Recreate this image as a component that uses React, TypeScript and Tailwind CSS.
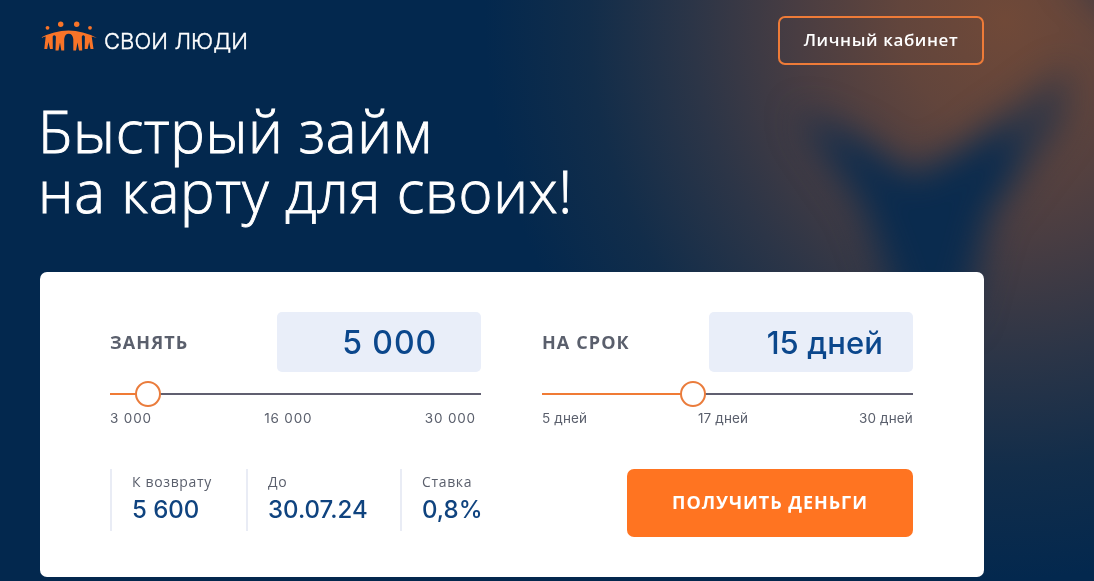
import { useState } from "react";

interface SliderProps {
  label: string;
  display: string;
  value: number;
  min: number;
  max: number;
  marks: string[];
  labelClass: string;
  displayClass: string;
  marksClass: string;
  onChange: (value: number) => void;
}

function Backdrop() {
  return (
    <svg
      className="absolute inset-0 h-full w-full"
      viewBox="0 0 1094 581"
      preserveAspectRatio="xMaxYMin slice"
      aria-hidden="true"
    >
      <defs>
        <radialGradient
          id="glow"
          cx="0"
          cy="0"
          r="1"
          gradientUnits="userSpaceOnUse"
          gradientTransform="translate(1005 20) scale(520 560)"
        >
          <stop offset="0" stopColor="#704938" />
          <stop offset="0.2" stopColor="#62453c" />
          <stop offset="0.4" stopColor="#493d42" />
          <stop offset="0.6" stopColor="#2c3547" />
          <stop offset="0.8" stopColor="#122d4a" />
          <stop offset="1" stopColor="#03284e" />
        </radialGradient>
        <filter id="soft" x="-50%" y="-50%" width="200%" height="200%" colorInterpolationFilters="sRGB">
          <feGaussianBlur stdDeviation="18" />
        </filter>
      </defs>
      <rect width="1094" height="581" fill="#03284e" />
      <rect width="1094" height="581" fill="url(#glow)" />
      <g fill="#0a2b4e" filter="url(#soft)">
        <path d="M798 112 L860 140 L912 176 L965 148 L1012 118 L1012 175 L990 215 L962 320 L905 320 L862 205 Z" />
        <path d="M975 138 L1072 66 L1062 125 L1000 205 Z" opacity="0.6" />
        <path d="M1060 -30 L1150 -30 L1150 50 Z" opacity="0.4" />
      </g>
    </svg>
  );
}

function Logo() {
  return (
    <a href="#" className="flex items-end gap-[6px]">
      <svg width="58" height="31" viewBox="0 0 58 31" fill="#f97428">
        <circle cx="7.5" cy="6.8" r="1.9" />
        <circle cx="20.7" cy="3.2" r="2.7" />
        <circle cx="36.7" cy="3.2" r="2.7" />
        <circle cx="50" cy="6.8" r="1.9" />
        <path d="M0 17 Q28.500 2 57 17 L51.700 15.500 L53.500 28 L50.500 28 L49.200 21 L47.600 28 L44.700 28 L44.900 15.500 Q43.200 13 41.800 15.500 L42.200 29.500 L39 29.500 L37.500 21.500 L36 29.500 L33.300 29.500 L33.300 18 Q32.500 12.800 28.700 12.800 Q24.800 12.800 24.200 18 L24.200 29.500 L21.300 29.500 L20 21.500 L18.500 29.500 L15.500 29.500 L15.900 15.500 Q14.200 13 12.700 15.500 L12.800 28 L10 28 L8.400 21 L7.200 28 L4.300 28 L5.700 15.500 Z" />
      </svg>
      <span className="mb-[-4px] font-[Inter,sans-serif] text-[22px] leading-[29px] font-light tracking-[0.1px] whitespace-nowrap text-white [-webkit-text-stroke:0.4px_white]">
        СВОИ ЛЮДИ
      </span>
    </a>
  );
}

function Slider({
  label,
  display,
  value,
  min,
  max,
  marks,
  labelClass,
  displayClass,
  marksClass,
  onChange,
}: SliderProps) {
  const pct = ((value - min) / (max - min)) * 100;

  return (
    <div className="w-[371px]">
      <div className="flex h-[60px] items-center justify-between">
        <span className={`text-[18px] font-bold text-[#5a5f6c] ${labelClass}`}>{label}</span>
        <div
          className={`flex h-full w-[204px] items-center justify-end rounded-[5px] bg-[#e9eef9] pt-0.5 font-[Inter,sans-serif] font-medium whitespace-nowrap text-[#0b478c] ${displayClass}`}
        >
          {display}
        </div>
      </div>
      <div className="relative mt-[9px] flex h-[26px] items-center">
        <div className="h-0.5 w-full bg-[#605f70]">
          <div className="h-full bg-[#f07b35]" style={{ width: `${pct}%` }} />
        </div>
        <span
          className="absolute size-[26px] -translate-x-1/2 rounded-full border-2 border-[#ea7c3c] bg-white"
          style={{ left: `${pct}%` }}
        />
        <input
          type="range"
          aria-label={label}
          className="absolute inset-0 w-full cursor-pointer opacity-0"
          min={min}
          max={max}
          value={value}
          step="any"
          onChange={(e) => onChange(Number(e.target.value))}
        />
      </div>
      <div
        className={`mt-px flex h-5 items-center justify-between font-[Inter,sans-serif] text-[13.5px] text-[#5a5f6c] ${marksClass}`}
      >
        {marks.map((mark) => (
          <span key={mark}>{mark}</span>
        ))}
      </div>
    </div>
  );
}

function Fact({ title, value, className }: { title: string; value: string; className: string }) {
  return (
    <div className={`h-[62px] border-l-2 border-[#e9ecf5] pl-5 whitespace-nowrap ${className}`}>
      <p className="pt-1 text-[14px] leading-[18px] tracking-[0.65px] text-[#5a5f6c]">{title}</p>
      <p className="mt-1 font-[Inter,sans-serif] text-[24px] leading-[30px] font-medium text-[#0f437f]">
        {value}
      </p>
    </div>
  );
}

export default function App() {
  const [amount, setAmount] = useState(5000);
  const [days, setDays] = useState(15.2);

  return (
    <div className="relative h-[581px] w-full overflow-hidden bg-[#03284e] font-['Open_Sans',sans-serif]">
      <Backdrop />
      <div className="relative ml-10 w-[944px]">
        {/* Header */}
        <header className="flex h-[65px] items-end justify-between">
          <div className="pb-[13px]">
            <Logo />
          </div>
          <button className="h-[49px] w-[206px] rounded-[7px] border-2 border-[#ee7b38] pb-px text-[17px] font-semibold tracking-[0.6px] whitespace-nowrap text-white">
            Личный кабинет
          </button>
        </header>

        <h1 className="mt-9 -ml-0.5 h-[171px] text-[58px] leading-[60px] font-light whitespace-nowrap text-white [-webkit-text-stroke:0.9px_white]">
          <span className="block tracking-[0.6px]">Быстрый займ</span>
          <span className="block tracking-[0.7px]">на карту для своих!</span>
        </h1>

        {/* Calculator */}
        <main className="h-[305px] rounded-[7px] bg-white pt-10 pr-[71px] pl-[70px]">
          <div className="flex justify-between">
            <Slider
              label="ЗАНЯТЬ"
              display={Math.round(amount).toLocaleString("ru-RU").replace(/^(\d)(\d{3})$/, "$1 $2")}
              value={amount}
              min={3000}
              max={22500}
              marks={["3 000", "16 000", "30 000"]}
              labelClass="tracking-[1.1px]"
              displayClass="pr-[44px] text-[32px] tracking-[0.9px]"
              marksClass="pr-[5px] tracking-[0.85px]"
              onChange={setAmount}
            />
            <Slider
              label="НА СРОК"
              display={`${Math.floor(days)} дней`}
              value={days}
              min={5}
              max={30}
              marks={["5 дней", "17 дней", "30 дней"]}
              labelClass="tracking-[1.1px]"
              displayClass="pr-[30px] text-[31px] tracking-[0.1px]"
              marksClass="tracking-[0.15px]"
              onChange={setDays}
            />
          </div>

          <div className="mt-[41px] flex justify-between">
            <div className="flex">
              <Fact title="К возврату" value="5 600" className="w-[136px]" />
              <Fact title="До" value="30.07.24" className="w-[154px]" />
              <Fact title="Ставка" value="0,8%" className="w-[100px]" />
            </div>
            <button className="h-[68px] w-[286px] rounded-[7px] bg-[#ff7421] pb-px text-[18px] font-bold tracking-[0.95px] whitespace-nowrap text-white">
              ПОЛУЧИТЬ ДЕНЬГИ
            </button>
          </div>
        </main>
      </div>
    </div>
  );
}
